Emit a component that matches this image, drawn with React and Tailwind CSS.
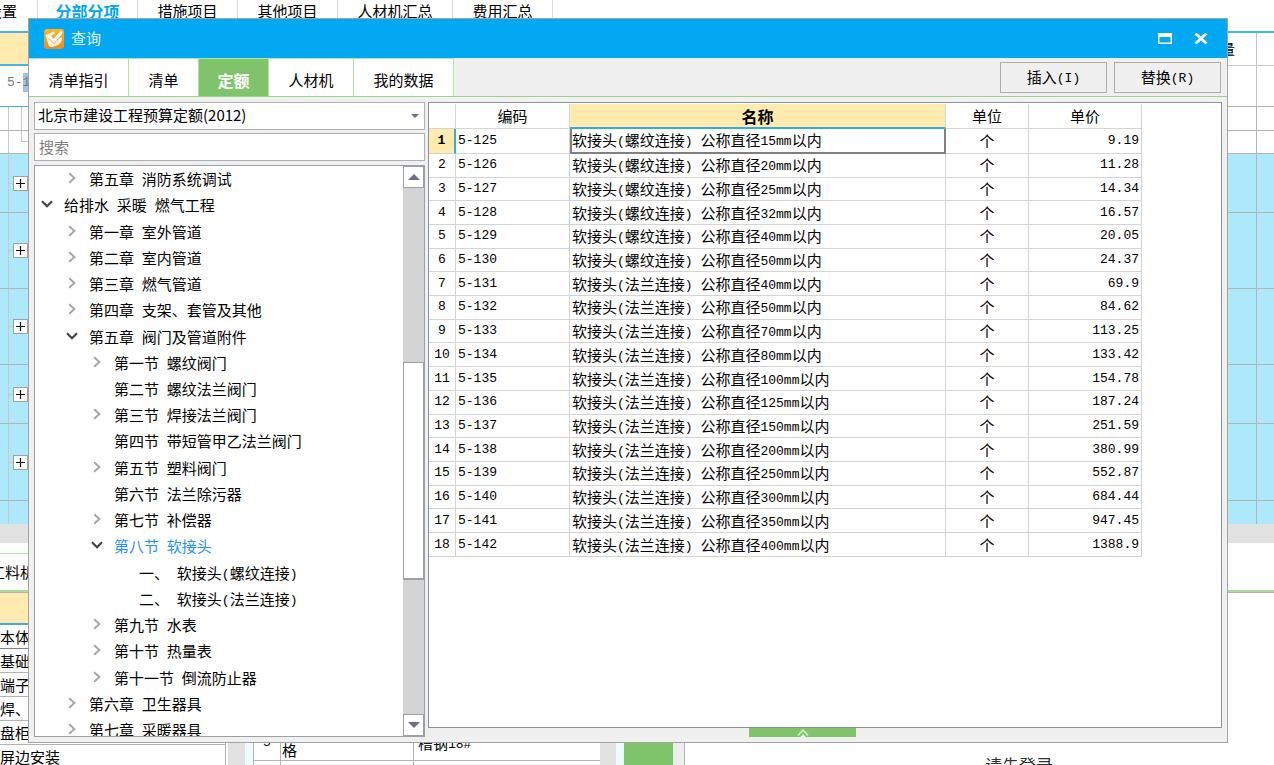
import React from "react";
import clsx from "clsx";

const LATIN = /([\x20-\x7e]+)/;

/* Sets half-width characters in a monospaced face beside the full-width ones. */
function Mixed({ children }) {
  return (
    <span className="whitespace-pre">
      {children.split(LATIN).map((part, i) =>
        i % 2 ? (
          <span key={i} className="align-[1px] font-['Liberation_Mono',monospace] text-[13px] leading-none">
            {part}
          </span>
        ) : (
          part
        ),
      )}
    </span>
  );
}

/* ---------- Main window behind the dialog ---------- */

const projectTabs = [
  { label: "分部分项", width: "w-[100px]", active: true },
  { label: "措施项目", width: "w-[100px]" },
  { label: "其他项目", width: "w-[100px]" },
  { label: "人材机汇总", width: "w-[115px]" },
  { label: "费用汇总", width: "w-[100px]" },
];

const itemRows = ["h-[59px]", "h-[76px]", "h-[76px]", "h-[59px]", "h-[77px]"];

const partRows = ["本体", "基础", "端子", "焊、", "盘柜", "屏边安装"];

function ProjectTabs() {
  return (
    <nav className="flex h-[33px] shrink-0 border-b-2 border-[#45b3e4] leading-[22px]">
      <a href="#settings" className="flex w-[38px] justify-end border-r border-[#d9d9d9] pr-5 whitespace-nowrap">
        设置
      </a>
      {projectTabs.map((t) => (
        <a
          key={t.label}
          href="#tab"
          className={clsx(
            "border-r border-[#d9d9d9] text-center",
            t.width,
            t.active && "text-base leading-[22px] font-bold text-[#00a8f3]",
          )}
        >
          {t.label}
        </a>
      ))}
    </nav>
  );
}

function ItemGrid() {
  return (
    <div className="shrink-0">
      <div className="flex h-[33px] justify-between">
        <div className="w-7 border-b-2 border-[#45b3e4] bg-[#ffebb0]" />
        <div className="flex w-[60px] border-b border-[#c4c4c4]">
          <span className="w-[43px] border-r border-[#c4c4c4] pl-1.5 leading-8">量</span>
        </div>
      </div>
      <div className="flex h-[41px] justify-between">
        <div className="w-7 border-b border-[#45b3e4] pl-[7px] leading-7 text-[#777] whitespace-nowrap">
          <span className="font-['Liberation_Mono',monospace] text-[13px]">
            5-<span className="bg-[#9fc3ef] py-0.5">1</span>
          </span>
        </div>
        <div className="flex w-[60px] border-b border-[#b4b4b4]">
          <span className="w-[43px] border-r border-[#c4c4c4]" />
        </div>
      </div>
      <div className="flex h-6 justify-between border-b border-[#b4b4b4]">
        <div className="flex w-[22px]">
          <span className="w-[9px] border-r border-[#c8c8c8]" />
          <span className="flex-1 border-r border-[#c8c8c8]" />
        </div>
        <div className="flex w-[60px]">
          <span className="w-[43px] border-r border-[#b4b4b4]" />
        </div>
      </div>
      <div className="flex h-[23px] justify-between border-b border-[#b4b4b4]">
        <div className="flex w-7">
          <span className="w-[9px] border-r border-[#c8c8c8]" />
          <span className="w-3" />
          <span className="h-[11px] flex-1 border-b border-l border-[#c8c8c8]" />
        </div>
        <div className="flex w-[60px]">
          <span className="w-[43px] border-r border-[#b4b4b4]" />
        </div>
      </div>
      {itemRows.map((h, i) => (
        <div key={i} className={clsx("flex justify-between border-b border-[#b4b4b4] bg-[#aee9fb]", h)}>
          <div className="flex w-7 items-center">
            <span className="h-full w-[9px] border-r border-[#c8c8c8]" />
            <span className="h-px w-1 bg-[#c8c8c8]" />
            <button
              type="button"
              aria-label="展开"
              className="flex size-[15px] items-center justify-center border border-[#a0a0a0] bg-white"
            >
              <svg viewBox="0 0 9 9" className="size-[9px]" stroke="#111" strokeWidth="1.2">
                <path d="M4.5 0v9M0 4.5h9" />
              </svg>
            </button>
          </div>
          <div className="flex w-[60px]">
            <span className="w-[43px] border-r border-[#b4b4b4]" />
          </div>
        </div>
      ))}
      <div className="flex h-[23px] justify-between bg-[#aee9fb]">
        <span className="w-[9px] border-r border-[#c8c8c8]" />
        <div className="flex w-[60px]">
          <span className="w-[43px] border-r border-[#b4b4b4]" />
        </div>
      </div>
      <div className="h-[19px] bg-[#e2e2e2]" />
    </div>
  );
}

function DetailPane() {
  return (
    <>
      <div className="mt-2.5 flex h-[39px] shrink-0 border-b-2 border-[#a9dc9a]">
        <a
          href="#detail"
          className="flex w-[100px] items-center border-t border-[#b5e3a8] whitespace-nowrap"
        >
          <span className="-ml-2.5">工料机显示</span>
        </a>
      </div>
      <div className="flex min-h-0 flex-1 overflow-hidden border-t border-[#b4b4b4]">
        <div className="w-[226px] shrink-0 border-r border-[#b4b4b4]">
          <div className="h-8 border-b-2 border-[#45a9dc] bg-[#ffebb0]" />
          <ul>
            {partRows.map((p, i) => (
              <li
                key={p}
                className={clsx(
                  "h-6 border-b leading-6 whitespace-nowrap",
                  i === 0 ? "border-[#808080]" : "border-[#b4b4b4]",
                )}
              >
                {p}
              </li>
            ))}
          </ul>
        </div>
        <div className="ml-0.5 w-[17px] shrink-0 bg-[#e2e2e2]" />
        <div className="w-2 shrink-0 bg-[#edfdff]" />
        <div className="flex w-[347px] shrink-0 flex-col border-l border-[#b4b4b4]">
          <div className="h-[132px] shrink-0" />
          <div className="flex h-9 shrink-0 border-b border-[#b4b4b4]">
            <span className="w-[27px] border-r border-[#b4b4b4] text-center font-['Liberation_Mono',monospace] text-[13px] leading-9">
              5
            </span>
            <span className="flex w-[133px] items-end border-r border-[#b4b4b4] pl-px leading-[20px]">格</span>
            <span className="pl-1 leading-9">
              <Mixed>槽钢18#</Mixed>
            </span>
          </div>
          <div className="flex flex-1">
            <span className="w-[27px] border-r border-[#b4b4b4]" />
            <span className="w-[133px] border-r border-[#b4b4b4]" />
          </div>
        </div>
        <div className="w-4 shrink-0 bg-[#e2e2e2]" />
        <div className="w-2 shrink-0 bg-[#edfdff]" />
        <div className="w-[49px] shrink-0 bg-[#7fc36a]" />
        <div className="w-3 shrink-0 border-r border-[#b4b4b4] bg-[#eee]" />
        <div className="flex flex-1 flex-col justify-end pl-[300px]">
          <p className="-mb-3 text-[17px] leading-6 text-[#333]">请先登录</p>
        </div>
      </div>
    </>
  );
}

/* ---------- Query dialog ---------- */

const queryTabs = [
  { label: "清单指引", width: "w-[100px]" },
  { label: "清单", width: "w-[70px]" },
  { label: "定额", width: "w-[70px]", active: true },
  { label: "人材机", width: "w-[85px]" },
  { label: "我的数据", width: "w-[100px]" },
];

const treeNodes = [
  [1, "closed", "第五章 消防系统调试"],
  [0, "open", "给排水 采暖 燃气工程"],
  [1, "closed", "第一章 室外管道"],
  [1, "closed", "第二章 室内管道"],
  [1, "closed", "第三章 燃气管道"],
  [1, "closed", "第四章 支架、套管及其他"],
  [1, "open", "第五章 阀门及管道附件"],
  [2, "closed", "第一节 螺纹阀门"],
  [2, "leaf", "第二节 螺纹法兰阀门"],
  [2, "closed", "第三节 焊接法兰阀门"],
  [2, "leaf", "第四节 带短管甲乙法兰阀门"],
  [2, "closed", "第五节 塑料阀门"],
  [2, "leaf", "第六节 法兰除污器"],
  [2, "closed", "第七节 补偿器"],
  [2, "open", "第八节 软接头", true],
  [3, "leaf", "一、 软接头(螺纹连接)"],
  [3, "leaf", "二、 软接头(法兰连接)"],
  [2, "closed", "第九节 水表"],
  [2, "closed", "第十节 热量表"],
  [2, "closed", "第十一节 倒流防止器"],
  [1, "closed", "第六章 卫生器具"],
  [1, "closed", "第七章 采暖器具"],
];

const indents = ["pl-1.5", "pl-[31px]", "pl-14", "pl-[81px]"];

const quotas = [
  ["5-125", "软接头(螺纹连接) 公称直径15mm以内", "9.19"],
  ["5-126", "软接头(螺纹连接) 公称直径20mm以内", "11.28"],
  ["5-127", "软接头(螺纹连接) 公称直径25mm以内", "14.34"],
  ["5-128", "软接头(螺纹连接) 公称直径32mm以内", "16.57"],
  ["5-129", "软接头(螺纹连接) 公称直径40mm以内", "20.05"],
  ["5-130", "软接头(螺纹连接) 公称直径50mm以内", "24.37"],
  ["5-131", "软接头(法兰连接) 公称直径40mm以内", "69.9"],
  ["5-132", "软接头(法兰连接) 公称直径50mm以内", "84.62"],
  ["5-133", "软接头(法兰连接) 公称直径70mm以内", "113.25"],
  ["5-134", "软接头(法兰连接) 公称直径80mm以内", "133.42"],
  ["5-135", "软接头(法兰连接) 公称直径100mm以内", "154.78"],
  ["5-136", "软接头(法兰连接) 公称直径125mm以内", "187.24"],
  ["5-137", "软接头(法兰连接) 公称直径150mm以内", "251.59"],
  ["5-138", "软接头(法兰连接) 公称直径200mm以内", "380.99"],
  ["5-139", "软接头(法兰连接) 公称直径250mm以内", "552.87"],
  ["5-140", "软接头(法兰连接) 公称直径300mm以内", "684.44"],
  ["5-141", "软接头(法兰连接) 公称直径350mm以内", "947.45"],
  ["5-142", "软接头(法兰连接) 公称直径400mm以内", "1388.9"],
];

function AppIcon() {
  return (
    <svg viewBox="0 0 20 20" className="size-5">
      <defs>
        <linearGradient id="appIconFill" x1="0" y1="0" x2="0" y2="1">
          <stop offset="0" stopColor="#fbb62a" />
          <stop offset="1" stopColor="#ee8a1d" />
        </linearGradient>
      </defs>
      <rect width="20" height="20" rx="3" fill="url(#appIconFill)" />
      <path d="M1.500 6 10 2.500 11 4.500 6.800 7 9.400 10 16.500 2 18.800 3.500 15 9 18 8.500C18.200 12.500 15.500 16.500 10 17.500 6.500 18.500 4.800 17.800 4.200 15z" fill="#fff4e0" />
      <path d="M6.800 7 9.400 10.200 16.500 2.200 18.500 3.600 10 14.200 4.600 8.600z" fill="#fff" />
      <path d="M5 9.500 10 14.800 15.500 8.600" fill="none" stroke="#f3a448" strokeWidth="0.900" />
    </svg>
  );
}

function TitleBar() {
  return (
    <header className="flex h-[39px] shrink-0 items-center bg-[#02a8f1] pr-[19px] pl-[15px] text-white">
      <AppIcon />
      <h1 className="ml-[7px] text-[#e3f6ff]">查询</h1>
      <button type="button" aria-label="最大化" className="ml-auto">
        <svg viewBox="0 0 14 11" className="h-[11px] w-3.5">
          <path d="M0 0h14v11H0zM1.500 4v5.500h11V4z" fill="#fff" fillRule="evenodd" />
        </svg>
      </button>
      <button type="button" aria-label="关闭" className="ml-[22px]">
        <svg viewBox="0 0 14 11" className="h-[11px] w-3.5">
          <path d="M1.500 0.500 12.500 10.500M12.500 0.500 1.500 10.500" stroke="#fff" strokeWidth="2.800" />
        </svg>
      </button>
    </header>
  );
}

function Toolbar() {
  return (
    <div className="flex h-[39px] shrink-0 justify-between border-b border-[#9ad48a]">
      <div role="tablist" className="flex border-t border-[#b1e79e]">
        {queryTabs.map((t) => (
          <button
            key={t.label}
            type="button"
            role="tab"
            aria-selected={!!t.active}
            className={clsx(
              "border-r border-[#b1e79e] pt-1 leading-5",
              t.width,
              t.active ? "bg-[#7fc36a] text-base leading-5 font-bold text-white" : "bg-white",
            )}
          >
            {t.label}
          </button>
        ))}
      </div>
      <div className="flex items-start gap-[7px] pt-1 pr-1.5">
        {["插入(I)", "替换(R)"].map((label) => (
          <button key={label} type="button" className="h-[31px] w-[107px] border border-[#adadad] bg-[#f0f0f0]">
            <Mixed>{label}</Mixed>
          </button>
        ))}
      </div>
    </div>
  );
}

function Chevron({ open }) {
  return open ? (
    <svg viewBox="0 0 12 8" className="h-2 w-3" fill="none" stroke="#444" strokeWidth="2.200">
      <path d="M1 1.200 6 6.200 11 1.200" />
    </svg>
  ) : (
    <svg viewBox="0 0 8 12" className="h-3 w-2" fill="none" stroke="#a8a8a8" strokeWidth="2">
      <path d="M1.200 1.200 6.400 6 1.200 10.800" />
    </svg>
  );
}

function CatalogTree() {
  return (
    <div className="flex min-h-0 flex-1 overflow-hidden border border-[#9a9fa8] bg-white">
      <ul role="tree" className="flex h-[577px] flex-1 flex-col">
        {treeNodes.map(([level, state, label, selected]) => (
          <li
            key={label + level}
            role="treeitem"
            aria-selected={!!selected}
            className={clsx("flex min-h-0 flex-1 items-center", indents[level], selected && "text-[#1e90ff]")}
          >
            {state === "leaf" ? (
              <span className="w-3" />
            ) : (
              <button type="button" aria-label={state === "open" ? "收起" : "展开"} className="mb-0.5 flex w-3 justify-center">
                <Chevron open={state === "open"} />
              </button>
            )}
            <span className="ml-[11px] leading-6">
              <Mixed>{label}</Mixed>
            </span>
          </li>
        ))}
      </ul>
      <div className="flex w-[21px] flex-col bg-[#d4d4d4]">
        <button type="button" aria-label="向上滚动" className="flex h-[22px] items-center justify-center border border-[#a0a0a0] bg-white">
          <svg viewBox="0 0 12 6" className="h-1.5 w-3" fill="#6d7085">
            <path d="M0 6h12L6 0z" />
          </svg>
        </button>
        <div className="mt-[174px] h-[218px] border border-b-2 border-[#a0a0a0] bg-white" />
        <button
          type="button"
          aria-label="向下滚动"
          className="mt-auto flex h-[22px] items-center justify-center border border-[#a0a0a0] bg-white"
        >
          <svg viewBox="0 0 12 6" className="h-1.5 w-3" fill="#6d7085">
            <path d="M0 0h12L6 6z" />
          </svg>
        </button>
      </div>
    </div>
  );
}

function CatalogPanel() {
  return (
    <aside className="flex w-[391px] shrink-0 flex-col">
      <div className="grid h-7 shrink-0">
        <select
          aria-label="定额库"
          className="col-start-1 row-start-1 appearance-none border border-[#b0b0b0] bg-white pb-0.5 pl-[3px] text-black"
        >
          <option>北京市建设工程预算定额(2012)</option>
        </select>
        <svg
          viewBox="0 0 8 4"
          className="pointer-events-none col-start-1 row-start-1 mr-1.5 h-1 w-2 self-center justify-self-end"
          fill="#6d7085"
        >
          <path d="M0 0h8L4 4z" />
        </svg>
      </div>
      <input
        type="search"
        aria-label="搜索"
        placeholder="搜索"
        className="my-[3px] h-7 shrink-0 border border-[#b0b0b0] bg-white pb-0.5 pl-1 placeholder:text-[#808080]"
      />
      <div className="mt-px flex min-h-0 flex-1 flex-col">
        <CatalogTree />
      </div>
    </aside>
  );
}

function QuotaTable() {
  const line = "border-r border-b border-[#d4d4d4]";
  const mono = "font-['Liberation_Mono',monospace] text-[13px]";
  return (
    <table className="h-[453px] w-[713px] table-fixed border-separate border-spacing-0">
      <colgroup>
        <col className="w-[27px]" />
        <col className="w-[114px]" />
        <col className="w-[376px]" />
        <col className="w-[83px]" />
        <col className="w-[113px]" />
      </colgroup>
      <thead>
        <tr className="h-[25px] leading-5">
          <th className={clsx(line, "p-0")} aria-label="序号" />
          <th className={clsx(line, "p-0 font-normal")}>编码</th>
          <th className="border-r border-b-2 border-r-[#d4d4d4] border-b-[#33addc] bg-[#ffebb0] p-0 text-base leading-5 font-bold">
            名称
          </th>
          <th className={clsx(line, "p-0 font-normal")}>单位</th>
          <th className={clsx(line, "p-0 font-normal")}>单价</th>
        </tr>
      </thead>
      <tbody>
        {quotas.map(([code, name, price], i) => (
          <tr key={code} className="leading-5">
            <th
              className={clsx(
                mono,
                "border-b border-b-[#d4d4d4] p-0 leading-5",
                i === 0
                  ? "border-r-2 border-r-[#33addc] bg-[#ffebb0] font-bold"
                  : "border-r border-r-[#d4d4d4] font-normal",
              )}
            >
              {i + 1}
            </th>
            <td className={clsx(line, mono, "p-0 pl-0.5 leading-5")}>{code}</td>
            <td className={clsx(i === 0 ? "border-2 border-t-0 border-[#808080] pl-0" : clsx(line, "pl-0.5"), "py-0 pr-0")}>
              <Mixed>{name}</Mixed>
            </td>
            <td className={clsx(line, "p-0 text-center")}>个</td>
            <td className={clsx(line, mono, "p-0 pr-0.5 text-right leading-5")}>{price}</td>
          </tr>
        ))}
      </tbody>
    </table>
  );
}

function QueryDialog() {
  return (
    <section
      role="dialog"
      aria-label="查询"
      className="absolute top-[18px] right-[46px] bottom-[22px] left-7 flex flex-col border border-[#a3a3a3] bg-[#f0f0f0]"
    >
      <TitleBar />
      <Toolbar />
      <div className="flex min-h-0 flex-1 gap-[3px] p-[5px]">
        <CatalogPanel />
        <div className="flex min-w-0 flex-1 flex-col">
          <div className="min-h-0 flex-1 overflow-hidden border border-[#8a929c] bg-white pt-px">
            <QuotaTable />
          </div>
          <button
            type="button"
            aria-label="展开面板"
            className="ml-[321px] flex h-[9px] w-[107px] shrink-0 items-end justify-center bg-[#7fc36a]"
          >
            <svg viewBox="0 0 12 9" className="h-[9px] w-3">
              <path d="M1 7.500 6 2 11 7.500" fill="none" stroke="#d8f0cf" strokeWidth="1.500" />
              <path d="M3.500 9 6 6 8.500 9z" fill="#fff" />
            </svg>
          </button>
        </div>
      </div>
    </section>
  );
}

export default function App() {
  return (
    <main className="relative flex h-screen flex-col overflow-hidden bg-white font-['Noto_Sans_CJK_SC',sans-serif] text-[15px] text-black">
      <ProjectTabs />
      <ItemGrid />
      <DetailPane />
      <QueryDialog />
    </main>
  );
}
